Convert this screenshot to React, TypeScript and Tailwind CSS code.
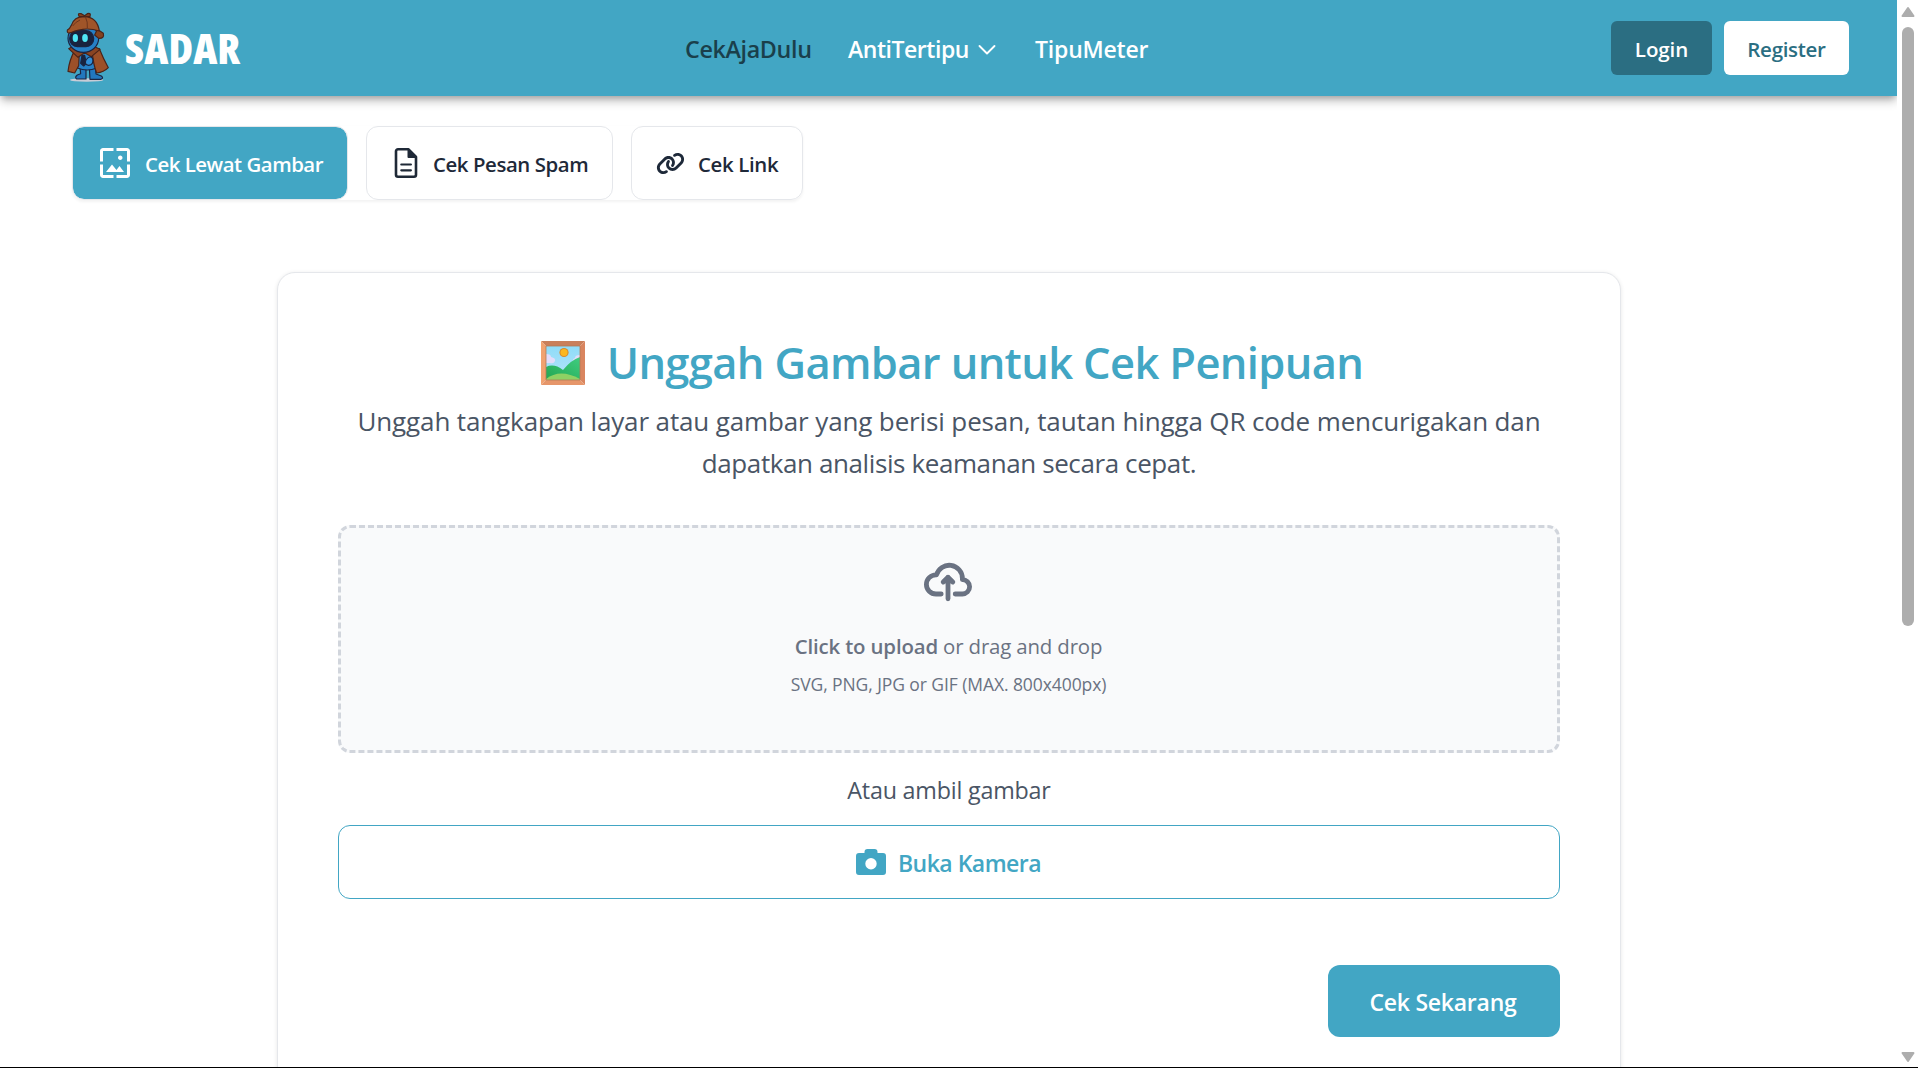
import React from "react";
import { MdWallpaper } from "react-icons/md";
import { FaLink } from "react-icons/fa6";

function Mascot() {
  return (
    <svg className="h-20 w-[60px] shrink-0" viewBox="0 0 180 240">
      <ellipse cx="80" cy="216" rx="50" ry="5" fill="#c9ccd6" />
      <g stroke="#1b2440" strokeWidth="3.500" strokeLinejoin="round">
        <path d="M60 178h18v35H50q-7-5 2-12l10-4z" fill="#2277bd" />
        <path d="M88 178h18l2 20 16 6q8 6-1 10H90z" fill="#2277bd" />
        <path d="M50 136h60v44q-28 12-58 0z" fill="#2680c6" />
        <path d="M46 124q-18 30-22 66l20 5 12-22 2-44z" fill="#9c5028" stroke="#4a2318" />
        <path d="M96 128l22-6q12 30 27 57-14 14-35 16-10-24-14-67z" fill="#9c5028" stroke="#4a2318" />
        <path d="M26 122l28 26 20-14 20 12 26-22-16-8H36z" fill="#8a4422" stroke="#4a2318" />
        <ellipse cx="70" cy="91" rx="46" ry="42" fill="#2680c6" />
        <rect x="29" y="68" width="72" height="48" rx="23" fill="#18233f" />
        <path d="M112 64l18 12q4 16-14 15l-12-10z" fill="#82421f" stroke="#4a2318" />
        <path d="M22 66q8-4 12-14 8-26 38-27 40 2 46 44-44-14-86 5-12 4-10-8z" fill="#a05529" stroke="#4a2318" />
        <path d="M58 26q-8-12 6-9l10 6 8-6q12-4 8 9z" fill="#82421f" stroke="#4a2318" />
        <path d="M66 142l-4 24 9 8 8-8-5-24z" fill="#18233f" />
        <path d="M78 156q12-16 20-4 4 18-12 20-14-2-8-16z" fill="#318fd6" />
      </g>
      <ellipse cx="46" cy="90" rx="8" ry="12" fill="#4fe6f5" />
      <ellipse cx="75" cy="90" rx="8.500" ry="12" fill="#4fe6f5" />
      <path d="M76 26q8 16 6 34M38 54q8-12 22-18" stroke="#6e361d" strokeWidth="3" fill="none" />
    </svg>
  );
}

function FileIcon() {
  return (
    <svg className="h-[30px] w-6 shrink-0" viewBox="0 0 24 30" fill="none" stroke="#1f2937">
      <path d="M4 1.3h10.500l7.500 7.500v17.900a2 2 0 0 1-2 2H4a2 2 0 0 1-2-2V3.300a2 2 0 0 1 2-2z" strokeWidth="2.600" strokeLinejoin="round" />
      <path d="M14.500 1.500v7.500h7.500z" fill="#1f2937" strokeWidth="2" strokeLinejoin="round" />
      <path d="M7.300 16.500h9.600M7.300 22.300h9.600" strokeWidth="2.200" strokeLinecap="round" />
    </svg>
  );
}

function PictureIcon() {
  return (
    <svg className="h-11 w-11 shrink-0" viewBox="0 0 44 44">
      <defs>
        <linearGradient id="sky" x1="0" y1="0" x2="0" y2="1">
          <stop offset="0" stopColor="#8fdcf8" />
          <stop offset="1" stopColor="#b5e3fb" />
        </linearGradient>
        <linearGradient id="hill" x1="0" y1="1" x2="1" y2="0">
          <stop offset="0" stopColor="#22a652" />
          <stop offset="1" stopColor="#3fcd80" />
        </linearGradient>
      </defs>
      <path d="M0 0h44l-5 5H5z" fill="#c97f5a" />
      <path d="M0 0l5 5v34l-5 5z" fill="#f0a270" />
      <path d="M44 0v44l-5-5V5z" fill="#d9855f" />
      <path d="M0 44h44l-5-5H5z" fill="#e6966a" />
      <rect x="5" y="5" width="34" height="34" fill="url(#sky)" />
      <path d="M5 13q5 0 5 3 5 1 4 4-1 3-5 2H5zM39 14q-5 0-5 3-4 2-1 5h6z" fill="#e3dcfa" />
      <circle cx="23" cy="11.500" r="4.600" fill="#d98a2b" />
      <circle cx="23" cy="11.500" r="3.500" fill="#fcb71e" />
      <path d="M5 26q8-4 17 3 8-10 17-13v23H5z" fill="url(#hill)" />
      <path d="M5 38q14-11 34 0v1H5z" fill="#8fd164" />
      <rect x="5" y="5" width="34" height="34" fill="none" stroke="#b07a58" strokeWidth="0.800" />
    </svg>
  );
}

function CameraIcon() {
  return (
    <svg className="h-[26px] w-[30px] shrink-0" viewBox="0 0 30 26" fill="#42a6c4">
      <path
        fillRule="evenodd"
        d="M11.500 0h7a3 3 0 0 1 3 3v1H27a3 3 0 0 1 3 3v16a3 3 0 0 1-3 3H3a3 3 0 0 1-3-3V7a3 3 0 0 1 3-3h5.500V3a3 3 0 0 1 3-3zM15 9a5.700 5.700 0 1 0 0 11.400A5.700 5.700 0 0 0 15 9z"
      />
    </svg>
  );
}

function Header() {
  return (
    <header className="relative z-10 flex h-24 w-[1897px] items-center bg-[#42a6c4] shadow-[0_6px_9px_-1px_rgba(0,0,0,0.25),0_3px_6px_-2px_rgba(0,0,0,0.2)]">
      <div className="flex w-[685px] items-center pl-[60px]">
        <Mascot />
        <span className="ml-[5px] text-[42px] leading-none font-extrabold tracking-[0.1px] text-white [font-stretch:78%]">SADAR</span>
      </div>
      <nav className="flex w-[926px] items-center pt-[3px] text-[23px] font-semibold whitespace-nowrap text-white">
        <a className="w-[163px] text-[23.300px] font-[550] tracking-[-0.35px] text-[#1a3f4b]">CekAjaDulu</a>
        <a className="w-[130px] tracking-[-0.45px]">AntiTertipu</a>
        <svg className="mr-[39px] h-4 w-[18px]" viewBox="0 0 18 16" fill="none" stroke="white" strokeWidth="1.900" strokeLinecap="round" strokeLinejoin="round">
          <path d="M1.500 4l7.500 7.500L16.500 4" />
        </svg>
        <a className="tracking-[-0.200px]">TipuMeter</a>
      </nav>
      <div className="flex gap-3 text-[20.500px] font-[560]">
        <button className="h-[54px] w-[101px] rounded-md bg-[#2b6e82] pt-0.5 font-semibold tracking-[-0.1px] text-white">Login</button>
        <button className="h-[54px] w-[125px] rounded-md bg-white pt-0.5 font-[540] tracking-[-0.3px] text-[#2b6e82]">Register</button>
      </div>
    </header>
  );
}

function Tabs() {
  const tab = "flex h-[74px] items-center rounded-xl border border-gray-200 whitespace-nowrap";
  return (
    <div className="mt-[30px] ml-[72px] flex w-[731px] gap-[18px] rounded-xl text-[20.400px] font-[560] text-gray-800 shadow-[0_1.500px_3px_rgba(0,0,0,0.05)]">
      <button className={tab + " w-[276px] bg-[#42a6c4] bg-clip-padding pl-6 tracking-[-0.48px] text-white"}>
        <MdWallpaper className="mr-3 h-9 w-9 shrink-0" />
        <span className="pt-0.5">Cek Lewat Gambar</span>
      </button>
      <button className={tab + " w-[247px] bg-white pl-[27px]"}>
        <FileIcon />
        <span className="ml-[15px] pt-0.5 tracking-[-0.42px]">Cek Pesan Spam</span>
      </button>
      <button className={tab + " w-[172px] bg-white pl-6"}>
        <FaLink className="mr-[13px] h-[23px] w-[29px] shrink-0" />
        <span className="pt-0.5 tracking-[-0.35px]">Cek Link</span>
      </button>
    </div>
  );
}

function UploadCard() {
  return (
    <section className="mt-[72px] ml-[277px] h-[900px] w-[1344px] rounded-[18px] border border-gray-200 bg-white px-[60px] pt-[67px] shadow-[0_1.500px_4px_rgba(0,0,0,0.1)]">
      <h1 className="flex h-[46px] items-center justify-center pl-[6px] text-[43.500px] font-semibold tracking-[-0.65px] whitespace-nowrap text-[#42a6c4]">
        <PictureIcon />
        <span className="ml-[22px]">Unggah Gambar untuk Cek Penipuan</span>
      </h1>
      <p className="mt-[14px] text-center text-[26px] leading-[42px] whitespace-nowrap text-gray-600">
        <span className="block tracking-[-0.13px]">Unggah tangkapan layar atau gambar yang berisi pesan, tautan hingga QR code mencurigakan dan</span>
        <span className="block tracking-[-0.4px]">dapatkan analisis keamanan secara cepat.</span>
      </p>
      <div className="mt-[41px] flex h-[228px] flex-col items-center rounded-xl border-[3px] border-dashed border-gray-300 bg-gray-50 pt-[30px] pr-px text-gray-500">
        <svg className="mr-[2px] h-12 w-12" viewBox="0 0 20 16" fill="none" stroke="currentColor" strokeWidth="2" strokeLinecap="round" strokeLinejoin="round">
          <path d="M13 13h3a3 3 0 0 0 0-6h-.025A5.56 5.56 0 0 0 16 6.5 5.5 5.5 0 0 0 5.207 5.021C5.137 5.017 5.071 5 5 5a4 4 0 0 0 0 8h2.167M10 15V6m0 0L8 8m2-2 2 2" />
        </svg>
        <p className="mt-[25px] text-[20.400px] leading-[30px] tracking-[-0.15px]">
          <span className="font-semibold">Click to upload</span> or drag and drop
        </p>
        <p className="mt-[11px] text-[17.500px] leading-6 tracking-[-0.080px]">SVG, PNG, JPG or GIF (MAX. 800x400px)</p>
      </div>
      <p className="mt-[19px] text-center text-[23.300px] leading-9 tracking-[-0.2px] text-gray-600">Atau ambil gambar</p>
      <button className="mt-[17px] flex h-[74px] w-full items-center justify-center gap-3 rounded-xl border-[1.500px] border-[#42a6c4] pr-px text-[23px] font-semibold tracking-[-0.5px] text-[#42a6c4]">
        <CameraIcon />
        <span className="pt-0.5">Buka Kamera</span>
      </button>
      <div className="mt-[66px] flex justify-end">
        <button className="h-[72px] w-[232px] rounded-xl bg-[#42a6c4] pt-0.5 pr-0.5 text-[23px] font-semibold tracking-[-0.25px] text-white">Cek Sekarang</button>
      </div>
    </section>
  );
}

function Scrollbar() {
  return (
    <aside className="flex h-[1067px] w-[21px] flex-col items-center bg-white pr-px pl-0.5">
      <svg className="mt-[6px] h-[11px] w-[14px]" viewBox="0 0 14 11" fill="#adadad" stroke="#adadad" strokeWidth="2" strokeLinejoin="round">
        <path d="M7 2l5.500 8h-11z" />
      </svg>
      <div className="mt-[10px] h-[599px] w-3 rounded-full bg-[#adadad]" />
      <svg className="mt-auto mb-[4px] h-[11px] w-[14px]" viewBox="0 0 14 11" fill="#adadad" stroke="#adadad" strokeWidth="2" strokeLinejoin="round">
        <path d="M7 9l5.500-8h-11z" />
      </svg>
    </aside>
  );
}

export default function App() {
  return (
    <div className="h-[1068px] w-[1918px] overflow-hidden border-b border-black bg-white font-['Open_Sans',sans-serif]">
      <div className="flex h-[1067px] overflow-hidden">
        <main className="h-[1067px] w-[1897px] shrink-0 overflow-hidden">
          <Header />
          <Tabs />
          <UploadCard />
        </main>
        <Scrollbar />
      </div>
    </div>
  );
}
